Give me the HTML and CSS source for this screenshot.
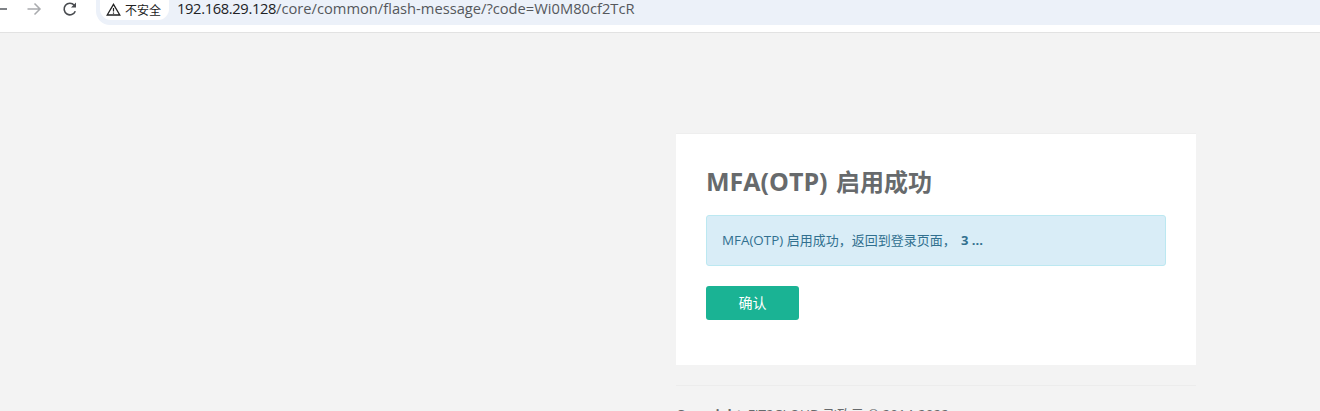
FILE: index.html
```html
<!DOCTYPE html>
<html lang="en">
<head>
  <meta charset="UTF-8">
  <title>Flash message</title>
  <link rel="stylesheet" href="styles.css">
</head>
<body>

<div class="toolbar">
  <div class="nav-icons">
    <svg class="back" width="8" height="14" viewBox="0 0 8 14"><path d="M0 7h8" stroke="#5f6368" stroke-width="1.6" fill="none"/></svg>
    <svg class="forward" width="16" height="14" viewBox="0 0 16 14"><path d="M1.500 7h12.500M8.500 1.500 14 7l-5.500 5.500" stroke="#a9abae" stroke-width="1.500" fill="none"/></svg>
    <svg class="reload" width="16" height="16" viewBox="0 0 16 16"><path d="M13.300 10.200A5.800 5.800 0 1 1 12.300 4.200" stroke="#484b4f" stroke-width="1.600" fill="none"/><path d="M14 1.500v5H9z" fill="#484b4f"/></svg>
  </div>
  <div class="address">
    <div class="chip">
      <svg width="15" height="13" viewBox="0 0 15 13"><path d="M7.500 1.300 13.800 12H1.200z" stroke="#222" stroke-width="1.300" fill="none"/><path d="M7.500 5v3.600M7.500 9.500v1.300" stroke="#222" stroke-width="1.200"/></svg>
      <span>不安全</span>
    </div>
    <div class="url"><span class="host">192.168.29.128</span>/core/common/flash-message/?code=Wi0M80cf2TcR</div>
  </div>
</div>

<div class="page">
  <div class="column">
    <div class="card">
      <h2><span class="latin">MFA(OTP) </span>启用成功</h2>
      <div class="alert"><span class="latin">MFA(OTP) </span>启用成功，返回到登录页面， <strong>3 ...</strong></div>
      <a class="btn" href="#">确认</a>
    </div>
    <hr>
    <p class="copyright"><strong>Copyright</strong> FIT2CLOUD 飞致云 © 2014-2022</p>
  </div>
</div>

</body>
</html>
```

FILE: styles.css
```css
html, body {
  margin: 0;
  padding: 0;
  height: 411px;
  overflow: hidden;
}

body {
  font-family: "Open Sans", "Noto Sans CJK SC", sans-serif;
  background-color: #f3f3f3;
}

.toolbar {
  height: 32px;
  background-color: #fff;
  border-bottom: 1px solid #e2e2e2;
  display: flex;
  align-items: flex-start;
}

.nav-icons {
  width: 96px;
  height: 18px;
  display: flex;
  align-items: center;
  flex-shrink: 0;
}

.back {
  margin-left: -1px;
}

.forward {
  margin-left: 19px;
}

.reload {
  margin-left: 20px;
}

.address {
  flex: 1;
  height: 26px;
  margin-top: -1px;
  background-color: #ecf1f9;
  border-radius: 0 0 0 14px;
  display: flex;
  align-items: flex-start;
}

.chip {
  height: 21px;
  width: 69px;
  margin-left: 4px;
  padding-left: 6px;
  box-sizing: border-box;
  background-color: #fff;
  border-radius: 0 0 11px 11px;
  display: flex;
  align-items: center;
  gap: 4px;
  font-size: 12px;
  color: #222;
}

.url {
  margin-left: 8px;
  font-size: 14.7px;
  line-height: 19px;
  color: #55585c;
}

.host {
  color: #202124;
  letter-spacing: -0.35px;
}

.page {
  display: flex;
  justify-content: flex-end;
  padding: 100px 124px 0 0;
}

.column {
  width: 520px;
}

.card {
  background-color: #fff;
  height: 232px;
  padding: 30px;
  box-sizing: border-box;
  border-top: 1px solid #eee;
}

h2 {
  margin: 0;
  height: 36px;
  font-size: 24px;
  line-height: 34px;
  font-weight: 700;
  color: #676a6c;
}

h2 .latin {
  font-size: 25px;
  margin-right: 2px;
}

.alert {
  margin-top: 15px;
  height: 51px;
  box-sizing: border-box;
  padding: 0 15px;
  line-height: 49px;
  font-size: 13px;
  color: #31708f;
  background-color: #d9edf7;
  border: 1px solid #bce8f1;
  border-radius: 3px;
}

.alert .latin {
  font-size: 13.4px;
}

.alert strong {
  margin-left: 2px;
}

.btn {
  display: block;
  width: 93px;
  height: 34px;
  margin-top: 20px;
  line-height: 34px;
  text-align: center;
  font-size: 14px;
  color: #fff;
  text-decoration: none;
  background-color: #1ab394;
  border-radius: 3px;
}

hr {
  border: 0;
  border-top: 1px solid #ececec;
  margin: 20px 0 0;
}

.copyright {
  margin: 18px 0 0;
  font-size: 13.6px;
  color: #676a6c;
}

.copyright strong {
  margin-right: 2px;
}
```
